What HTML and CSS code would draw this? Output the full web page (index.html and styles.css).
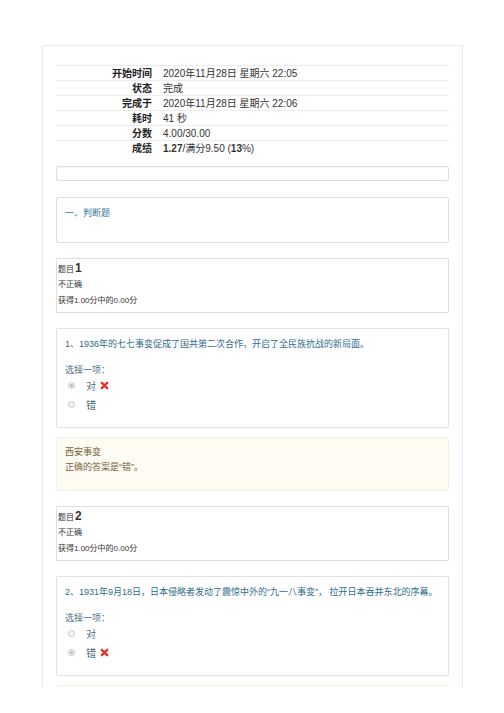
FILE: index.html
```html
<!DOCTYPE html>
<html lang="zh">
<head>
    <meta charset="UTF-8">
    <title>测验回顾</title>
    <link rel="stylesheet" href="styles.css">
</head>
<body>
<div class="page">
    <table class="summary">
        <tr><th>开始时间</th><td>2020年11月28日 星期六 22:05</td></tr>
        <tr><th>状态</th><td>完成</td></tr>
        <tr><th>完成于</th><td>2020年11月28日 星期六 22:06</td></tr>
        <tr><th>耗时</th><td>41 秒</td></tr>
        <tr><th>分数</th><td>4.00/30.00</td></tr>
        <tr><th>成绩</th><td><b>1.27</b>/满分9.50 (<b>13</b>%)</td></tr>
    </table>
    <div class="emptybox"></div>

    <div class="section">一、判断题</div>

    <div class="info">
        <div class="qno">题目<span>1</span></div>
        <div>不正确</div>
        <div>获得1.00分中的0.00分</div>
    </div>
    <div class="question">
        <div class="qtext">1、1936年的七七事变促成了国共第二次合作，开启了全民族抗战的新局面。</div>
        <div class="prompt">选择一项：</div>
        <div class="answer"><span class="radio checked"></span><span class="opt">对</span><svg class="wrong" width="9" height="9" viewBox="0 0 10 10"><path d="M2 2 L8 8 M8 2 L2 8" stroke="#e0312f" stroke-width="2.6" stroke-linecap="round"/></svg></div>
        <div class="answer"><span class="radio"></span><span class="opt">错</span></div>
    </div>
    <div class="feedback">
        <div>西安事变</div>
        <div>正确的答案是“错”。</div>
    </div>

    <div class="info">
        <div class="qno">题目<span>2</span></div>
        <div>不正确</div>
        <div>获得1.00分中的0.00分</div>
    </div>
    <div class="question">
        <div class="qtext">2、1931年9月18日，日本侵略者发动了震惊中外的“九一八事变”， 拉开日本吞并东北的序幕。</div>
        <div class="prompt">选择一项：</div>
        <div class="answer"><span class="radio"></span><span class="opt">对</span></div>
        <div class="answer"><span class="radio checked"></span><span class="opt">错</span><svg class="wrong" width="9" height="9" viewBox="0 0 10 10"><path d="M2 2 L8 8 M8 2 L2 8" stroke="#e0312f" stroke-width="2.6" stroke-linecap="round"/></svg></div>
    </div>
    <div class="feedback last"></div>
</div>
</body>
</html>
```
FILE: styles.css
```css
*{
    box-sizing:border-box;
}
body{
    margin:0;
    background:#fff;
    font-family:"Liberation Sans","Noto Sans CJK SC",sans-serif;
    color:#333;
}
.page{
    margin:45px 0 0 42px;
    width:421px;
    height:642px;
    padding:19px 13px 0 13px;
    border:1px solid #e9e9e9;
    border-bottom:none;
}
.summary{
    width:100%;
    border-collapse:collapse;
    font-size:10px;
}
.summary tr{
    border-top:1px solid #ececec;
}
.summary th,.summary td{
    height:15px;
    line-height:13px;
    padding:0;
    vertical-align:middle;
}
.summary th{
    width:96px;
    text-align:right;
    color:#222;
}
.summary td{
    padding-left:11px;
    color:#333;
}
.emptybox{
    margin-top:10px;
    height:15px;
    border:1px solid #dedede;
    border-radius:2px;
    box-shadow:inset 0 1px 1px rgba(0,0,0,0.04);
}
.section{
    margin-top:16px;
    height:46px;
    padding:9px 8px 0 8px;
    border:1px solid #dedede;
    border-radius:2px;
    font-size:9px;
    line-height:12px;
    color:#3b7894;
}
.info{
    margin-top:15px;
    height:55px;
    padding:2px 1px 0 1px;
    border:1px solid #dedede;
    border-radius:1px;
    font-size:8px;
    line-height:16px;
    color:#333;
}
.info .qno{
    line-height:15px;
}
.info .qno span{
    font-size:12px;
    font-weight:bold;
    margin-left:1px;
}
.question{
    margin-top:15px;
    height:100px;
    padding:7px 8px 0 8px;
    border:1px solid #dde3e6;
    border-radius:2px;
    box-shadow:0 0 1px rgba(0,0,0,0.05);
}
.qtext{
    font-size:9px;
    line-height:16px;
    color:#2f6d8c;
}
.prompt{
    margin-top:12px;
    font-size:9px;
    line-height:12px;
    color:#4d6f80;
}
.answer{
    display:flex;
    align-items:center;
    height:19px;
    padding-left:3px;
}
.radio{
    width:7px;
    height:7px;
    border:1px solid #c8c8c8;
    border-radius:50%;
    background:#f4f4f4;
    position:relative;
}
.radio.checked::after{
    content:"";
    position:absolute;
    left:1px;
    top:1px;
    width:3px;
    height:3px;
    border-radius:50%;
    background:#b5b5b5;
}
.opt{
    margin-left:11px;
    font-size:10px;
    color:#4a6d7d;
}
.wrong{
    margin-left:4px;
}
.feedback{
    margin-top:9px;
    height:54px;
    padding:7px 8px 0 8px;
    background:#fdfbf2;
    border:1px solid #f6f2e4;
    border-radius:2px;
    font-size:9px;
    line-height:15px;
    color:#7a6340;
}
.feedback.last{
    height:40px;
}
```
